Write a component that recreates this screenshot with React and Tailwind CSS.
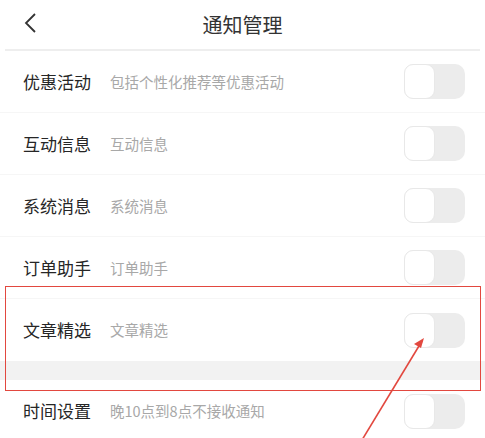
import { useState } from "react";

const rows = [
  { title: "优惠活动", desc: "包括个性化推荐等优惠活动" },
  { title: "互动信息", desc: "互动信息" },
  { title: "系统消息", desc: "系统消息" },
  { title: "订单助手", desc: "订单助手" },
  { title: "文章精选", desc: "文章精选" },
];

function Toggle({ onClick }) {
  return (
    <button
      onClick={onClick}
      className="w-[61px] h-[35px] rounded-[10px] bg-[#ececec] flex items-center shrink-0"
    >
      <span className="w-[31px] h-[35px] rounded-[9px] bg-white border border-[#e8e8e8]" />
    </button>
  );
}

function Row({ title, desc, last }) {
  const [on, setOn] = useState(false);
  return (
    <div
      className={
        "h-[62px] flex items-center pl-[23px] pr-[20px] " +
        (last ? "" : "border-b border-[#f6f6f6]")
      }
    >
      <span className="text-[17px] text-[#262626] w-[87px] shrink-0">{title}</span>
      <span className="text-[14.5px] text-[#a8a8a8] flex-1">{desc}</span>
      <Toggle onClick={() => setOn(!on)} />
    </div>
  );
}

export default function App() {
  return (
    <div
      className="relative w-[485px] h-[438px] overflow-hidden bg-white"
      style={{ fontFamily: '"Noto Sans CJK SC", "Noto Sans", sans-serif' }}
    >
      {/* 顶部 */}
      <div className="h-[49px] flex items-center justify-center relative">
        <svg
          className="absolute left-[22px] top-[12px]"
          width="16"
          height="22"
          viewBox="0 0 16 22"
          fill="none"
        >
          <path d="M13 2 L4 11 L13 20" stroke="#333" strokeWidth="1.8" />
        </svg>
        <span className="text-[20px] text-[#333]">通知管理</span>
      </div>
      <div className="h-[2px] bg-[#eeeeee] mx-[5px]" />

      {rows.map((r, i) => (
        <Row key={r.title} title={r.title} desc={r.desc} last={i === rows.length - 1} />
      ))}
      <div className="h-[19px] bg-[#f2f2f2]" />
      <Row title="时间设置" desc="晚10点到8点不接收通知" last />

      {/* 标注 */}
      <div className="absolute left-[5px] top-[286px] w-[476px] h-[105px] border-[1.5px] border-[#e2483f] pointer-events-none" />
      <svg
        className="absolute left-0 top-0 pointer-events-none"
        width="485"
        height="438"
        viewBox="0 0 485 438"
      >
        <line x1="362" y1="440" x2="422" y2="341" stroke="#e2483f" strokeWidth="1.6" />
        <path d="M424 338 L414 344 L421 348 Z" fill="#e2483f" />
      </svg>
    </div>
  );
}
